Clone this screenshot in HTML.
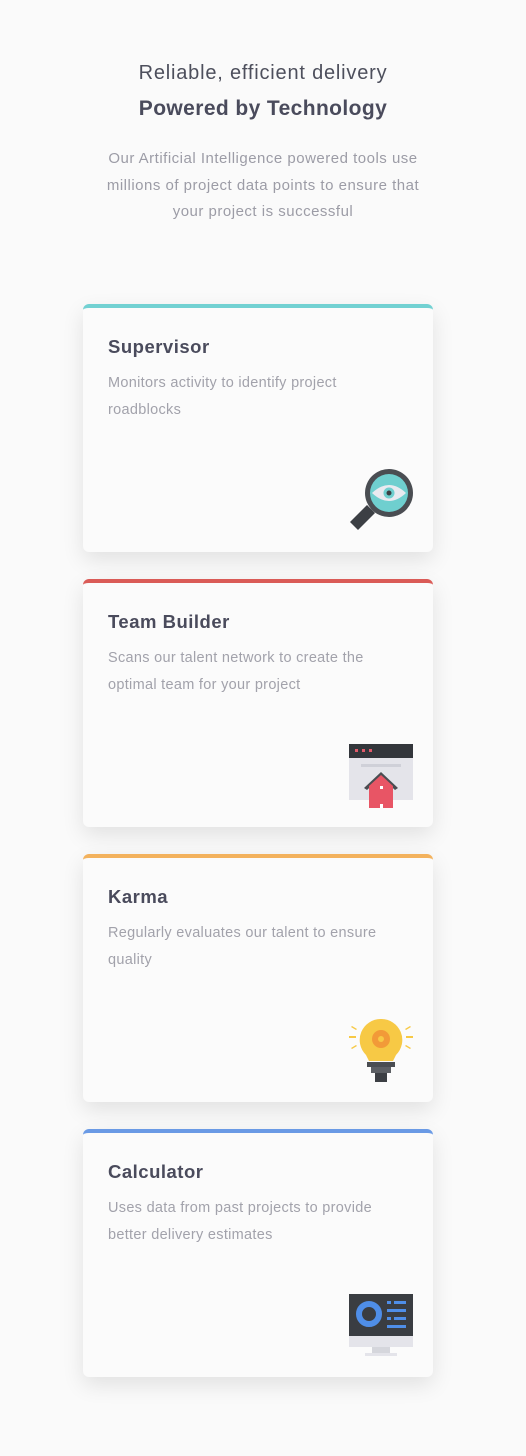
<!DOCTYPE html>
<html><head><meta charset="utf-8"><style>
html,body{margin:0;padding:0;background:#fafafa;width:526px;height:1456px;overflow:hidden;font-family:"Liberation Sans",sans-serif;}
.h1{position:absolute;top:62px;left:0;width:526px;text-align:center;font-size:20px;font-weight:300;color:#4d4f5c;letter-spacing:0.8px}
.h2{position:absolute;top:97px;left:0;width:526px;text-align:center;font-size:21px;font-weight:bold;color:#4a4b5c;letter-spacing:0.4px}
.p{position:absolute;top:146px;left:0;width:526px;text-align:center;font-size:15px;line-height:26.5px;color:#9c9ca6;letter-spacing:0.5px}
.card{position:absolute;left:83px;width:350px;height:244px;background:#fbfbfb;border-radius:6px;border-top:4px solid;box-shadow:0 8px 22px rgba(0,0,0,0.10)}
.card h3{position:absolute;left:25px;top:28px;margin:0;font-size:18.5px;font-weight:bold;color:#4a4b5c;letter-spacing:0.5px}
.card p{position:absolute;left:25px;top:62px;margin:0;width:320px;font-size:14.5px;line-height:27px;color:#a2a2ab;letter-spacing:0.3px}
.card svg{position:absolute;left:266px;top:161px}
</style></head><body>
<div class="h1">Reliable, efficient delivery</div>
<div class="h2">Powered by Technology</div>
<div class="p">Our Artificial Intelligence powered tools use<br>millions of project data points to ensure that<br>your project is successful</div>

<div class="card" style="top:304px;border-color:#72d1d2">
<h3>Supervisor</h3><p>Monitors activity to identify project<br>roadblocks</p>
<svg width="64" height="64" viewBox="0 0 64 64">
<path d="M18 36 L1 53 L9 61 L26 44Z" fill="#3c3f44"/>
<circle cx="40" cy="24" r="24" fill="#4a4d52"/>
<circle cx="40" cy="24" r="19" fill="#6fcfcf"/>
<path d="M23 24 Q40 8 57 24 Q40 40 23 24Z" fill="#e9eaf0"/>
<circle cx="40" cy="24" r="5.5" fill="#6fcfcf"/><circle cx="40" cy="24" r="2.5" fill="#3c3f44"/>
</svg></div>

<div class="card" style="top:579px;border-color:#da5b57">
<h3>Team Builder</h3><p>Scans our talent network to create the<br>optimal team for your project</p>
<svg width="64" height="64" viewBox="0 0 64 64">
<rect x="0" y="0" width="64" height="56" fill="#e4e4ea"/>
<rect x="0" y="0" width="64" height="14" fill="#33363b"/>
<rect x="6" y="5" width="3" height="3" fill="#e05a6a"/><rect x="13" y="5" width="3" height="3" fill="#e05a6a"/><rect x="20" y="5" width="3" height="3" fill="#e05a6a"/>
<rect x="12" y="20" width="40" height="3" fill="#cfd0d8"/>
<path d="M15 44 L32 28 L49 44 L46 46 L32 33 L18 46Z" fill="#4a4d52"/>
<path d="M20 42 L32 31 L44 42 L44 64 L20 64Z" fill="#e85565"/>
<rect x="31" y="42" width="3" height="3" fill="#fff"/><rect x="31" y="60" width="3" height="4" fill="#fff"/>
</svg></div>

<div class="card" style="top:854px;border-color:#f3b25d">
<h3>Karma</h3><p>Regularly evaluates our talent to ensure<br>quality</p>
<svg width="64" height="64" viewBox="0 0 64 64">
<g fill="#f7c945"><rect x="0" y="17" width="7" height="2"/><rect x="57" y="17" width="7" height="2"/>
<path d="M3 7 L8 10 L7 11 L2 8Z"/><path d="M61 7 L56 10 L57 11 L62 8Z"/><path d="M3 30 L8 27 L7 26 L2 29Z"/><path d="M61 30 L56 27 L57 26 L62 29Z"/></g>
<path d="M32 0 A21 21 0 0 0 17 36 L20 42 L44 42 L47 36 A21 21 0 0 0 32 0Z" fill="#f7c945"/>
<circle cx="32" cy="20" r="9" fill="#f29a38"/><circle cx="32" cy="20" r="3" fill="#f7c945"/>
<rect x="18" y="43" width="28" height="5" fill="#4a4d52"/>
<rect x="22" y="48" width="20" height="6" fill="#5c5f64"/>
<rect x="26" y="54" width="12" height="9" fill="#3c3f44"/>
</svg></div>

<div class="card" style="top:1129px;border-color:#6a9ae5">
<h3>Calculator</h3><p>Uses data from past projects to provide<br>better delivery estimates</p>
<svg width="64" height="64" viewBox="0 0 64 64">
<rect x="0" y="0" width="64" height="42" fill="#3a3d42"/>
<rect x="0" y="42" width="64" height="11" fill="#e4e4ea"/>
<rect x="23" y="53" width="18" height="6" fill="#d5d6dc"/>
<rect x="16" y="59" width="32" height="3" fill="#e4e4ea"/>
<circle cx="20" cy="20" r="10" fill="none" stroke="#4f8ee8" stroke-width="6"/>
<g fill="#4f8ee8"><rect x="38" y="7" width="4" height="3"/><rect x="45" y="7" width="12" height="3"/><rect x="38" y="15" width="19" height="3"/><rect x="38" y="23" width="4" height="3"/><rect x="45" y="23" width="12" height="3"/><rect x="38" y="31" width="19" height="3"/></g>
</svg></div>
</body></html>
